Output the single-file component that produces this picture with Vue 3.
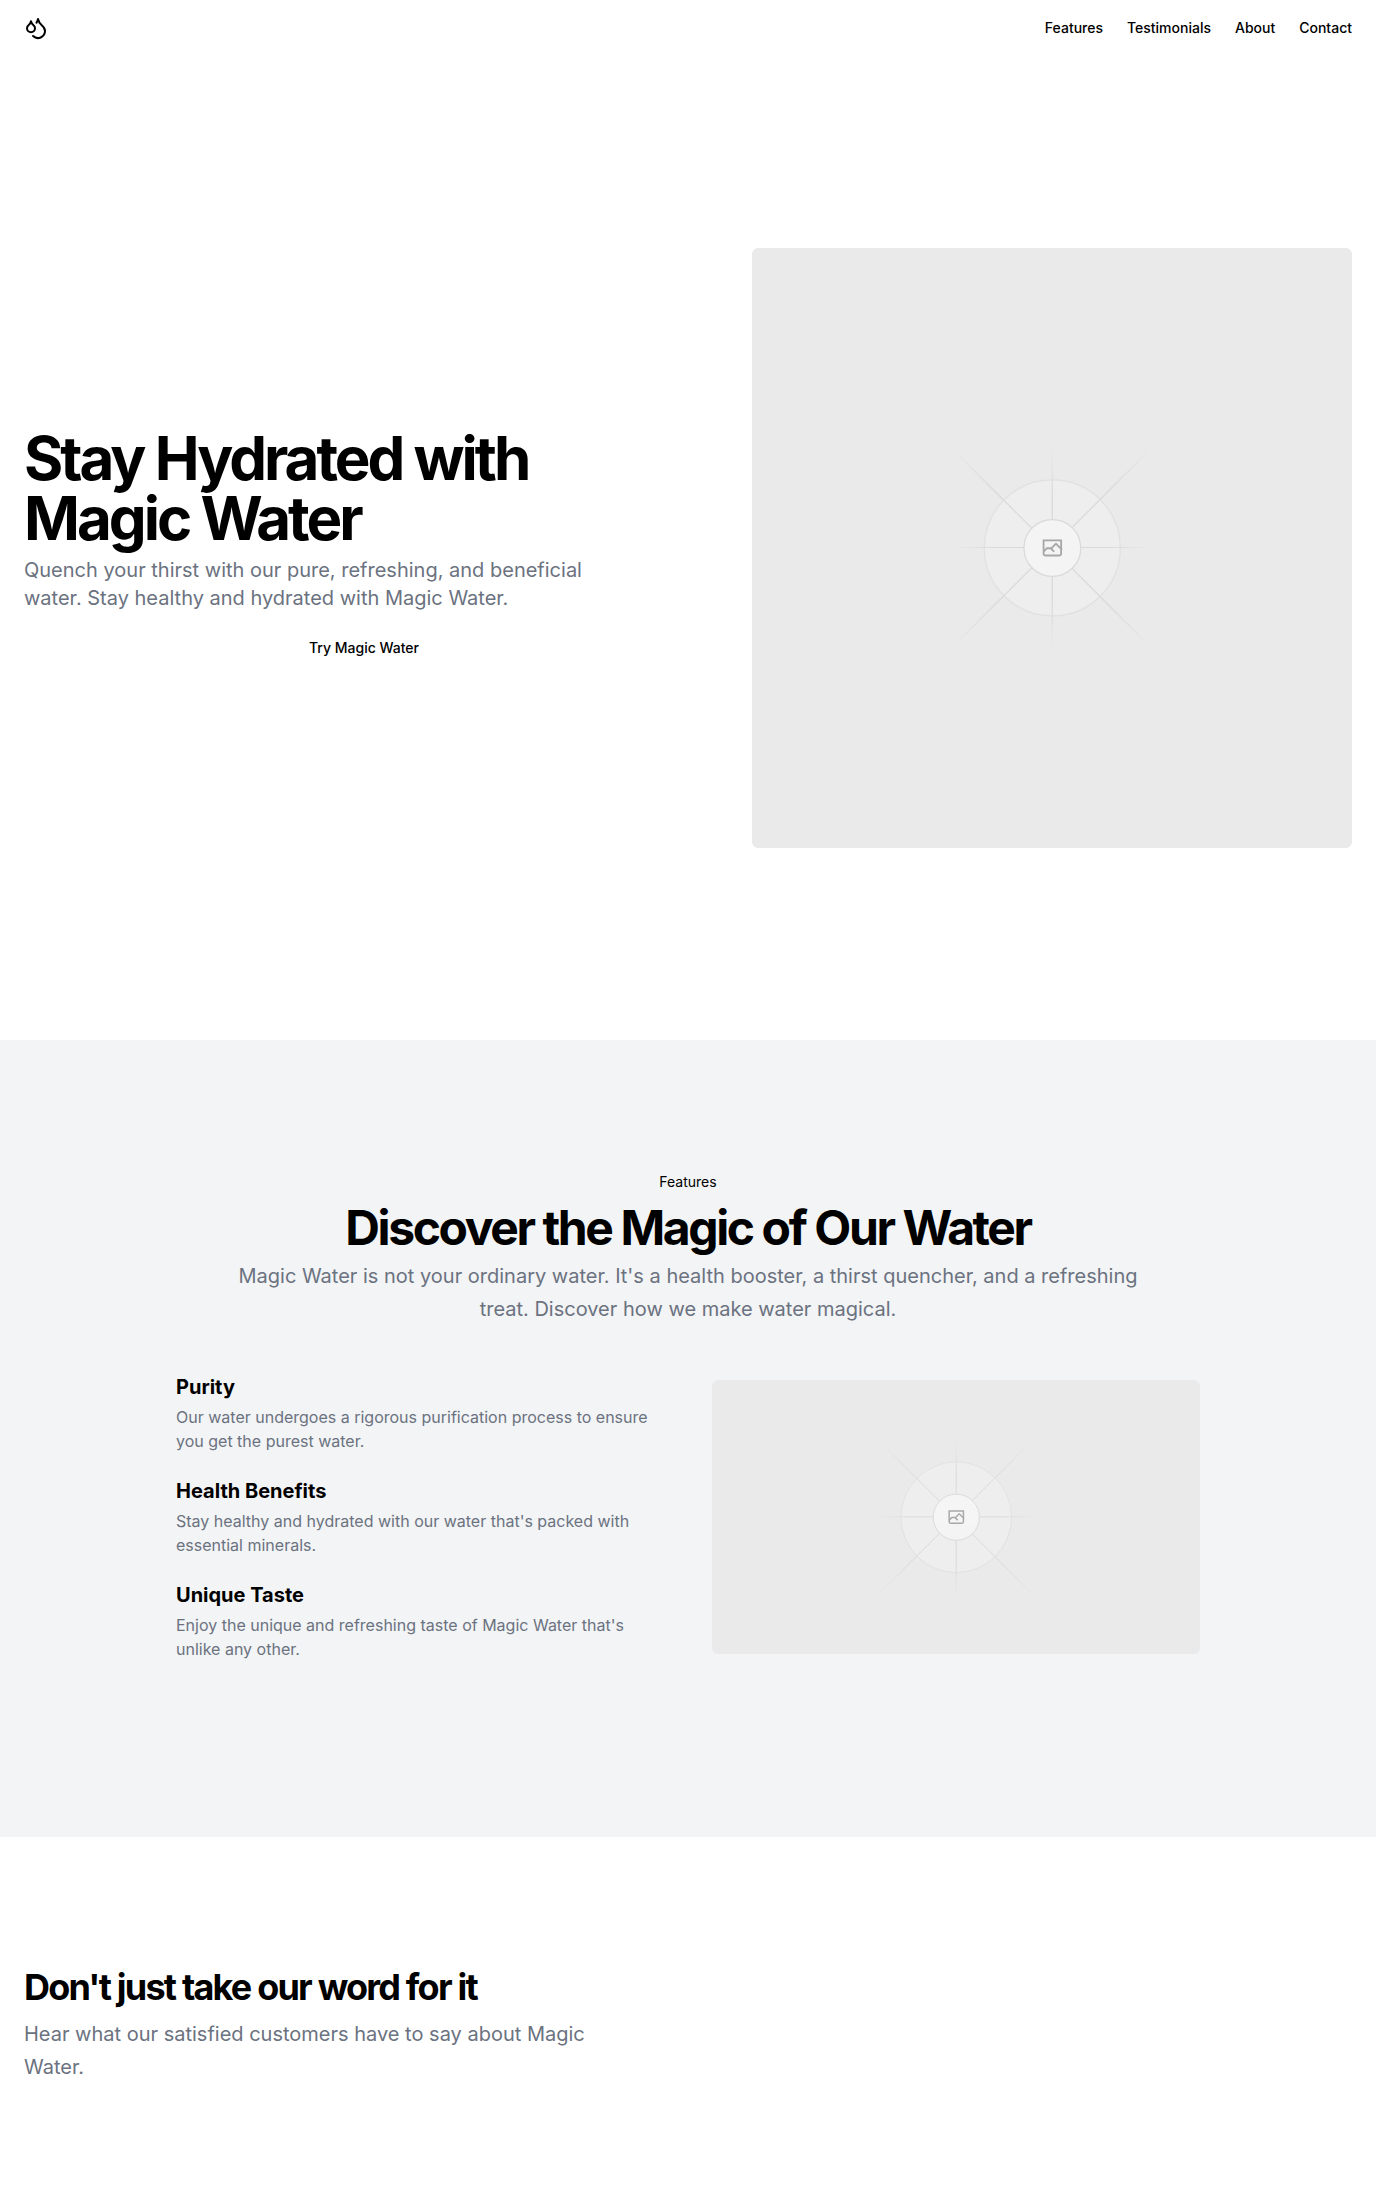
<script setup>
import { defineComponent, h } from 'vue'

const links = [
  { label: 'Features', href: '#features' },
  { label: 'Testimonials', href: '#testimonials' },
  { label: 'About', href: '#about' },
  { label: 'Contact', href: '#contact' }
]

const features = [
  {
    title: 'Purity',
    text: 'Our water undergoes a rigorous purification process to ensure you get the purest water.'
  },
  {
    title: 'Health Benefits',
    text: "Stay healthy and hydrated with our water that's packed with essential minerals."
  },
  {
    title: 'Unique Taste',
    text: "Enjoy the unique and refreshing taste of Magic Water that's unlike any other."
  }
]

// Spokes run through the centre and fade out at both ends.
const spokes = [
  { id: 'a', x1: 405, y1: 599, x2: 797, y2: 599.01 },
  { id: 'b', x1: 600.5, y1: 404, x2: 600.51, y2: 796 },
  { id: 'c', x1: 404, y1: 405, x2: 796, y2: 797 },
  { id: 'd', x1: 796, y1: 403, x2: 404, y2: 795 }
]

const glyph =
  'M616.426 586.58h-31.434v16.176l3.553-3.554.531-.531h9.068l.074-.074 8.463-8.463h2.565l7.18 7.181V586.58Zm-15.715 14.654 3.698 3.699 1.283 1.282-2.565 2.565-1.282-1.283-5.2-5.199h-6.066l-5.514 5.514-.073.073v2.876a2.418 2.418 0 0 0 2.418 2.418h26.598a2.418 2.418 0 0 0 2.418-2.418v-8.317l-8.463-8.463-7.181 7.181-.071.072Zm-19.347 5.442v4.085a6.045 6.045 0 0 0 6.046 6.045h26.598a6.044 6.044 0 0 0 6.045-6.045v-7.108l1.356-1.355-1.282-1.283-.074-.073v-17.989h-38.689v23.43l-.146.146.146.147Z'

const PlaceholderArt = defineComponent({
  props: { name: { type: String, required: true } },
  setup(props) {
    const stop = (offset, opacity) =>
      h('stop', { offset, 'stop-color': '#c9c9c9', 'stop-opacity': opacity })
    return () =>
      h(
        'svg',
        {
          viewBox: '0 0 1200 1200',
          preserveAspectRatio: 'xMidYMid slice',
          fill: 'none',
          role: 'img',
          'aria-label': 'Placeholder image'
        },
        [
          h('defs', spokes.map(({ id, x1, y1, x2, y2 }) =>
            h(
              'linearGradient',
              { id: `${props.name}-${id}`, x1, y1, x2, y2, gradientUnits: 'userSpaceOnUse' },
              [stop(0, 0), stop(0.208, 1), stop(0.792, 1), stop(1, 0)]
            )
          )),
          h('rect', { width: 1200, height: 1200, fill: '#eaeaea' }),
          h('g', { opacity: 0.5 }, [
            h('circle', {
              cx: 600.7, cy: 599.9, r: 136, fill: '#fafafa',
              stroke: '#c9c9c9', 'stroke-width': 2.418, opacity: 0.5
            }),
            ...spokes.map(({ id, x1, y1, x2, y2 }) =>
              h('line', {
                x1, y1, x2, y2, 'stroke-width': 2.418, stroke: `url(#${props.name}-${id})`
              })
            ),
            h('circle', { cx: 600.7, cy: 599.9, r: 56.8, fill: '#fff' }),
            h('path', { d: glyph, fill: '#666', 'fill-rule': 'evenodd' }),
            h('circle', {
              cx: 600.7, cy: 599.9, r: 56.8, stroke: '#c9c9c9', 'stroke-width': 2.418
            })
          ])
        ]
      )
  }
})
</script>

<template>
  <div class="page">
    <header class="header">
      <a class="logo" href="#" aria-label="Magic Water">
        <svg width="24" height="24" viewBox="0 0 24 24" fill="none" stroke="currentColor" stroke-width="2" stroke-linecap="round" stroke-linejoin="round" aria-hidden="true">
          <path d="M7 16.3c2.2 0 4-1.83 4-4.05 0-1.16-.57-2.26-1.71-3.19S7.29 6.75 7 5.3c-.29 1.45-1.14 2.84-2.29 3.76S3 11.1 3 12.25c0 2.22 1.8 4.05 4 4.05z" />
          <path d="M12.56 6.6A10.97 10.97 0 0 0 14 3.02c.5 2.5 2 4.9 4 6.5s3 3.5 3 5.5a6.98 6.98 0 0 1-11.91 4.97" />
        </svg>
      </a>
      <nav class="nav">
        <a v-for="link in links" :key="link.label" :href="link.href">{{ link.label }}</a>
      </nav>
    </header>

    <main>
      <section class="hero">
        <div class="hero-copy">
          <div class="hero-text">
            <h1>Stay Hydrated with Magic Water</h1>
            <p class="lead hero-lead">
              Quench your thirst with our pure, refreshing, and beneficial water. Stay healthy and hydrated with Magic Water.
            </p>
          </div>
          <a class="cta" href="#contact">Try Magic Water</a>
        </div>
        <div class="art art-square"><PlaceholderArt name="hero" /></div>
      </section>

      <section id="features" class="features">
        <div class="intro">
          <div class="tag">Features</div>
          <h2 class="features-title">Discover the Magic of Our Water</h2>
          <p class="lead features-lead">
            Magic Water is not your ordinary water. It's a health booster, a thirst quencher, and a refreshing treat. Discover how we make water magical.
          </p>
        </div>
        <div class="feature-grid">
          <ul class="feature-list">
            <li v-for="feature in features" :key="feature.title">
              <h3>{{ feature.title }}</h3>
              <p>{{ feature.text }}</p>
            </li>
          </ul>
          <div class="art art-wide"><PlaceholderArt name="features" /></div>
        </div>
      </section>

      <section id="testimonials" class="testimonials">
        <h2 class="testimonials-title">Don't just take our word for it</h2>
        <p class="lead">Hear what our satisfied customers have to say about Magic Water.</p>
      </section>
    </main>
  </div>
</template>

<style>
body {
  margin: 0;
  background: #fff;
}
</style>

<style scoped>
.page {
  color: #000;
  font-family: Inter, "Liberation Sans", sans-serif;
  font-size: 16px;
  line-height: 24px;
}

h1,
h2,
h3,
p,
ul {
  margin: 0;
  padding: 0;
}

a {
  color: inherit;
  text-decoration: none;
}

.header {
  display: flex;
  align-items: center;
  justify-content: space-between;
  height: 56px;
  padding: 0 24px;
}

.logo {
  display: flex;
}

.nav {
  display: flex;
  gap: 24px;
  font-size: 14px;
  font-weight: 500;
  line-height: 20px;
}

.nav a:hover,
.cta:hover {
  text-decoration: underline;
}

.hero {
  display: grid;
  grid-template-columns: minmax(0, 1fr) minmax(0, 600px);
  align-items: center;
  gap: 48px;
  padding: 192px 24px;
}

.hero-copy {
  display: flex;
  flex-direction: column;
  gap: 16px;
}

.hero-text {
  display: flex;
  flex-direction: column;
  gap: 8px;
}

h1,
h2 {
  font-weight: 700;
  letter-spacing: -0.05em;
}

h1 {
  font-size: 60px;
  line-height: 60px;
}

.lead {
  max-width: 600px;
  color: #6b7280;
  font-size: 20px;
  line-height: 1.625;
}

.hero-lead {
  line-height: 28px;
}

.cta {
  display: flex;
  align-items: center;
  justify-content: center;
  height: 40px;
  font-size: 14px;
  font-weight: 500;
  line-height: 20px;
}

.art {
  overflow: hidden;
  border-radius: 6px;
}

.art > svg {
  display: block;
  width: 100%;
  height: 100%;
}

.art-square {
  aspect-ratio: 1;
}

.art-wide {
  aspect-ratio: 16 / 9;
}

.features {
  padding: 128px 24px;
  background: #f3f4f6;
}

.intro {
  display: flex;
  flex-direction: column;
  align-items: center;
  gap: 8px;
  text-align: center;
}

.tag {
  padding: 4px 12px;
  font-size: 14px;
  line-height: 20px;
}

.features-title {
  font-size: 48px;
  line-height: 48px;
}

.features-lead {
  max-width: 900px;
}

.feature-grid {
  display: grid;
  grid-template-columns: repeat(2, minmax(0, 1fr));
  align-items: center;
  gap: 48px;
  max-width: 1024px;
  margin: 0 auto;
  padding: 48px 0;
}

.feature-list {
  display: flex;
  flex-direction: column;
  gap: 24px;
  list-style: none;
}

.feature-list li {
  display: flex;
  flex-direction: column;
  gap: 4px;
}

h3 {
  font-size: 20px;
  font-weight: 700;
  line-height: 28px;
}

.feature-list p {
  color: #6b7280;
}

.testimonials {
  display: flex;
  flex-direction: column;
  gap: 8px;
  padding: 128px 24px;
}

.testimonials-title {
  font-size: 36px;
  line-height: 45px;
}
</style>
